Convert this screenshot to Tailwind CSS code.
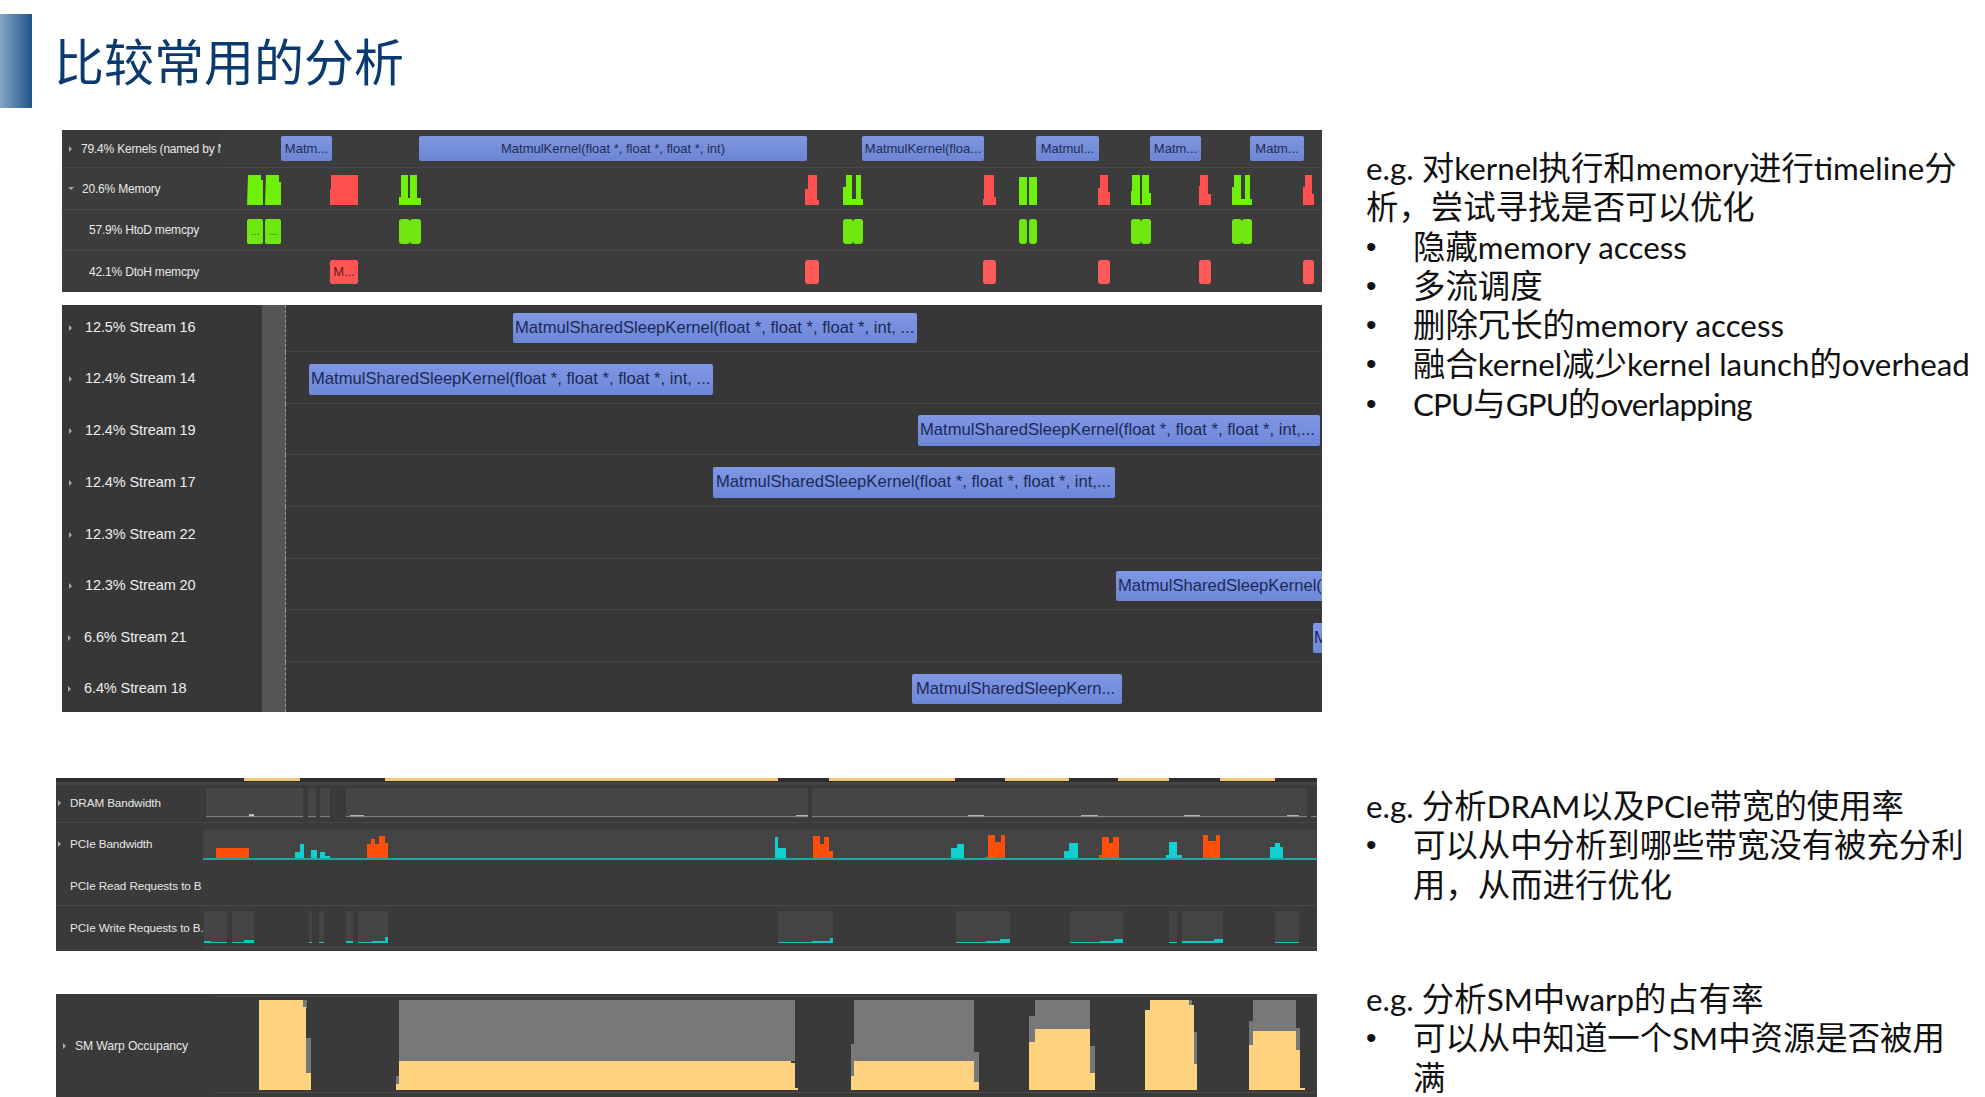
<!DOCTYPE html>
<html lang="zh-CN">
<head>
  <meta charset="UTF-8">
  <title>比较常用的分析</title>
  <script src="https://cdn.jsdelivr.net/npm/@tailwindcss/browser@4"></script>
</head>
<body class="bg-white h-[1097px] overflow-hidden flex font-['Liberation_Sans',sans-serif]">

  <!-- left column: title + timeline captures -->
  <div class="w-[1322px] shrink-0">
    <header class="h-[130px] flex items-start">
      <div class="w-[32px] h-[94px] mt-[14px] bg-linear-to-r from-[#86a5c4] to-[#1d5689]"></div>
      <h1 class="ml-[22px] mt-[23px] text-[50px] leading-[72px] text-[#0b3a70] font-['Noto_Sans_CJK_SC',sans-serif] whitespace-nowrap">比较常用的分析</h1>
    </header>

    <!-- kernels / memory -->
    <section class="ml-[62px] w-[1260px] h-[162px] bg-[#3c3c3c] text-[#e8e8e8] text-[12px] tracking-[-0.2px]">
      <div class="flex h-[38px] border-b border-[#484848]">
        <div class="w-[159px] shrink-0 flex items-center pl-[7px] gap-[9px] overflow-hidden whitespace-nowrap bg-[#3a3a3a]">
          <span class="w-0 h-0 border-y-[3px] border-y-transparent border-l-[3px] border-l-[#aaa]"></span>79.4% Kernels (named by N
        </div>
        <div class="relative flex-1 text-[#1f2d55] text-[13px] tracking-normal">
          <div class="absolute left-[60px] w-[51px] top-[6px] h-[25px] rounded-[2px] bg-linear-to-b from-[#7f97e0] to-[#6c86d4] flex items-center justify-center whitespace-nowrap">Matm...</div>
          <div class="absolute left-[198px] w-[388px] top-[6px] h-[25px] rounded-[2px] bg-linear-to-b from-[#7f97e0] to-[#6c86d4] flex items-center justify-center whitespace-nowrap">MatmulKernel(float *, float *, float *, int)</div>
          <div class="absolute left-[641px] w-[122px] top-[6px] h-[25px] rounded-[2px] bg-linear-to-b from-[#7f97e0] to-[#6c86d4] flex items-center justify-center whitespace-nowrap">MatmulKernel(floa...</div>
          <div class="absolute left-[815px] w-[63px] top-[6px] h-[25px] rounded-[2px] bg-linear-to-b from-[#7f97e0] to-[#6c86d4] flex items-center justify-center whitespace-nowrap">Matmul...</div>
          <div class="absolute left-[929px] w-[51px] top-[6px] h-[25px] rounded-[2px] bg-linear-to-b from-[#7f97e0] to-[#6c86d4] flex items-center justify-center whitespace-nowrap">Matm...</div>
          <div class="absolute left-[1029px] w-[54px] top-[6px] h-[25px] rounded-[2px] bg-linear-to-b from-[#7f97e0] to-[#6c86d4] flex items-center justify-center whitespace-nowrap">Matm...</div>
        </div>
      </div>
      <div class="flex h-[42px] border-b border-[#484848]">
        <div class="w-[159px] shrink-0 flex items-center pl-[6px] gap-[8px] whitespace-nowrap">
          <span class="w-0 h-0 border-x-[3px] border-x-transparent border-t-[3px] border-t-[#aaa]"></span>20.6% Memory
        </div>
        <svg class="flex-1 block" viewBox="221 168 1101 41" preserveAspectRatio="none">
          <g fill="#6ef00a">
            <path d="M248 175h13v5h2v25h-16z"/><path d="M266 175h13v7h2v23h-16z"/>
            <path d="M401 175h7v23h2v-23h7v23h4v7h-22v-8h2z"/>
            <path d="M846 175h6v24h4v-24h5v24h2v6h-20v-18h3z"/>
            <path d="M1019 177h8v28h-8zM1029 177h8v28h-8z"/>
            <path d="M1132 175h8v29h2v-29h7v18h2v12h-20v-14h1z"/>
            <path d="M1234 175h7v24h4v-24h5v24h2v6h-20v-18h2z"/>
          </g>
          <g fill="#ff4f4f">
            <path d="M331 175h27v30h-28v-16h1z"/>
            <path d="M808 175h9v25h2v5h-14v-16h3z"/>
            <path d="M984 175h10v22h2v8h-13v-6h1z"/>
            <path d="M1100 175h8v17h2v13h-12v-17h2z"/>
            <path d="M1200 175h8v19h3v11h-12v-19h1z"/>
            <path d="M1305 175h7v19h2v11h-11v-18h2z"/>
          </g>
        </svg>
      </div>
      <div class="flex h-[41px] border-b border-[#484848]">
        <div class="w-[159px] shrink-0 flex items-center pl-[27px] whitespace-nowrap">57.9% HtoD memcpy</div>
        <div class="relative flex-1 text-[#2f6a10] text-[11px] leading-none">
          <div class="absolute left-[26px] w-[16px] top-[9px] h-[25px] rounded-[2px] bg-[#6ee80e] flex items-center justify-center">...</div>
          <div class="absolute left-[44px] w-[16px] top-[9px] h-[25px] rounded-[2px] bg-[#6ee80e] flex items-center justify-center">...</div>
          <div class="absolute left-[178px] w-[11px] top-[9px] h-[25px] rounded-[3px] bg-[#6ee80e]"></div>
          <div class="absolute left-[189px] w-[11px] top-[9px] h-[25px] rounded-[3px] bg-[#6ee80e]"></div>
          <div class="absolute left-[622px] w-[10px] top-[9px] h-[25px] rounded-[3px] bg-[#6ee80e]"></div>
          <div class="absolute left-[632px] w-[10px] top-[9px] h-[25px] rounded-[3px] bg-[#6ee80e]"></div>
          <div class="absolute left-[798px] w-[8px] top-[9px] h-[25px] rounded-[3px] bg-[#6ee80e]"></div>
          <div class="absolute left-[808px] w-[8px] top-[9px] h-[25px] rounded-[3px] bg-[#6ee80e]"></div>
          <div class="absolute left-[910px] w-[10px] top-[9px] h-[25px] rounded-[3px] bg-[#6ee80e]"></div>
          <div class="absolute left-[920px] w-[10px] top-[9px] h-[25px] rounded-[3px] bg-[#6ee80e]"></div>
          <div class="absolute left-[1011px] w-[10px] top-[9px] h-[25px] rounded-[3px] bg-[#6ee80e]"></div>
          <div class="absolute left-[1021px] w-[10px] top-[9px] h-[25px] rounded-[3px] bg-[#6ee80e]"></div>
        </div>
      </div>
      <div class="flex h-[41px]">
        <div class="w-[159px] shrink-0 flex items-center pl-[27px] whitespace-nowrap">42.1% DtoH memcpy</div>
        <div class="relative flex-1 text-[#5a1f1f] text-[13px] tracking-normal">
          <div class="absolute left-[109px] w-[28px] top-[9px] h-[24px] rounded-[2px] bg-[#ff5555] flex items-center justify-center">M...</div>
          <div class="absolute left-[584px] w-[14px] top-[9px] h-[24px] rounded-[3px] bg-[#ff5a5a]"></div>
          <div class="absolute left-[762px] w-[13px] top-[9px] h-[24px] rounded-[3px] bg-[#ff5a5a]"></div>
          <div class="absolute left-[877px] w-[12px] top-[9px] h-[24px] rounded-[3px] bg-[#ff5a5a]"></div>
          <div class="absolute left-[978px] w-[12px] top-[9px] h-[24px] rounded-[3px] bg-[#ff5a5a]"></div>
          <div class="absolute left-[1082px] w-[11px] top-[9px] h-[24px] rounded-[3px] bg-[#ff5a5a]"></div>
        </div>
      </div>
    </section>

    <!-- streams -->
    <section class="ml-[62px] mt-[13px] w-[1260px] h-[407px] bg-[#373737] text-[#eeeeee] text-[14.5px] tracking-[-0.1px] overflow-hidden">
      <div class="flex h-[47px]">
        <div class="w-[200px] shrink-0 flex items-center pl-[7px] gap-[13px] whitespace-nowrap pb-[1px]"><span class="w-0 h-0 border-y-[3px] border-y-transparent border-l-[3px] border-l-[#aaa]"></span>12.5% Stream 16</div>
        <div class="w-[24px] shrink-0 bg-[#555555] border-r border-dashed border-[#9a9a9a]"></div>
        <div class="relative flex-1 border-b border-[#444444] text-[#1b2a55] text-[16.6px] tracking-normal">
          <div class="absolute left-[227px] w-[404px] top-[8px] h-[30px] rounded-[2px] bg-linear-to-b from-[#7f97e4] to-[#6d87d8] flex items-center px-[2px] whitespace-nowrap overflow-hidden">MatmulSharedSleepKernel(float *, float *, float *, int, ...</div>
        </div>
      </div>
      <div class="flex h-[52px]">
        <div class="w-[200px] shrink-0 flex items-center pl-[7px] gap-[13px] whitespace-nowrap pt-[2px]"><span class="w-0 h-0 border-y-[3px] border-y-transparent border-l-[3px] border-l-[#aaa]"></span>12.4% Stream 14</div>
        <div class="w-[24px] shrink-0 bg-[#555555] border-r border-dashed border-[#9a9a9a]"></div>
        <div class="relative flex-1 border-b border-[#444444] text-[#1b2a55] text-[16.6px] tracking-normal">
          <div class="absolute left-[23px] w-[404px] top-[12px] h-[31px] rounded-[2px] bg-linear-to-b from-[#7f97e4] to-[#6d87d8] flex items-center px-[2px] whitespace-nowrap overflow-hidden">MatmulSharedSleepKernel(float *, float *, float *, int, ...</div>
        </div>
      </div>
      <div class="flex h-[51px]">
        <div class="w-[200px] shrink-0 flex items-center pl-[7px] gap-[13px] whitespace-nowrap pt-[2px]"><span class="w-0 h-0 border-y-[3px] border-y-transparent border-l-[3px] border-l-[#aaa]"></span>12.4% Stream 19</div>
        <div class="w-[24px] shrink-0 bg-[#555555] border-r border-dashed border-[#9a9a9a]"></div>
        <div class="relative flex-1 border-b border-[#444444] text-[#1b2a55] text-[16.6px] tracking-normal">
          <div class="absolute left-[632px] w-[402px] top-[11px] h-[31px] rounded-[2px] bg-linear-to-b from-[#7f97e4] to-[#6d87d8] flex items-center px-[2px] whitespace-nowrap overflow-hidden">MatmulSharedSleepKernel(float *, float *, float *, int,...</div>
        </div>
      </div>
      <div class="flex h-[52px]">
        <div class="w-[200px] shrink-0 flex items-center pl-[7px] gap-[13px] whitespace-nowrap pt-[3px]"><span class="w-0 h-0 border-y-[3px] border-y-transparent border-l-[3px] border-l-[#aaa]"></span>12.4% Stream 17</div>
        <div class="w-[24px] shrink-0 bg-[#555555] border-r border-dashed border-[#9a9a9a]"></div>
        <div class="relative flex-1 border-b border-[#444444] text-[#1b2a55] text-[16.6px] tracking-normal">
          <div class="absolute left-[427px] w-[402px] top-[12px] h-[31px] rounded-[2px] bg-linear-to-b from-[#7f97e4] to-[#6d87d8] flex items-center px-[3px] whitespace-nowrap overflow-hidden">MatmulSharedSleepKernel(float *, float *, float *, int,...</div>
        </div>
      </div>
      <div class="flex h-[52px]">
        <div class="w-[200px] shrink-0 flex items-center pl-[7px] gap-[13px] whitespace-nowrap pt-[3px]"><span class="w-0 h-0 border-y-[3px] border-y-transparent border-l-[3px] border-l-[#aaa]"></span>12.3% Stream 22</div>
        <div class="w-[24px] shrink-0 bg-[#555555] border-r border-dashed border-[#9a9a9a]"></div>
        <div class="relative flex-1 border-b border-[#444444]"></div>
      </div>
      <div class="flex h-[51px]">
        <div class="w-[200px] shrink-0 flex items-center pl-[7px] gap-[13px] whitespace-nowrap pt-[3px]"><span class="w-0 h-0 border-y-[3px] border-y-transparent border-l-[3px] border-l-[#aaa]"></span>12.3% Stream 20</div>
        <div class="w-[24px] shrink-0 bg-[#555555] border-r border-dashed border-[#9a9a9a]"></div>
        <div class="relative flex-1 border-b border-[#444444] text-[#1b2a55] text-[16.6px] tracking-normal overflow-hidden">
          <div class="absolute left-[830px] w-[206px] top-[12px] h-[30px] rounded-l-[2px] bg-linear-to-b from-[#7f97e4] to-[#6d87d8] flex items-center px-[2px] whitespace-nowrap overflow-hidden">MatmulSharedSleepKernel(</div>
        </div>
      </div>
      <div class="flex h-[52px]">
        <div class="w-[200px] shrink-0 flex items-center pl-[6px] gap-[13px] whitespace-nowrap pt-[3px]"><span class="w-0 h-0 border-y-[3px] border-y-transparent border-l-[3px] border-l-[#aaa]"></span>6.6% Stream 21</div>
        <div class="w-[24px] shrink-0 bg-[#555555] border-r border-dashed border-[#9a9a9a]"></div>
        <div class="relative flex-1 border-b border-[#444444] text-[#1b2a55] text-[16.6px] overflow-hidden">
          <div class="absolute left-[1027px] w-[9px] top-[13px] h-[30px] rounded-l-[2px] bg-linear-to-b from-[#7f97e4] to-[#6d87d8] flex items-center pl-[1px] overflow-hidden">M</div>
        </div>
      </div>
      <div class="flex h-[50px]">
        <div class="w-[200px] shrink-0 flex items-center pl-[6px] gap-[13px] whitespace-nowrap pt-[4px]"><span class="w-0 h-0 border-y-[3px] border-y-transparent border-l-[3px] border-l-[#aaa]"></span>6.4% Stream 18</div>
        <div class="w-[24px] shrink-0 bg-[#555555] border-r border-dashed border-[#9a9a9a]"></div>
        <div class="relative flex-1 text-[#1b2a55] text-[16.6px] tracking-normal">
          <div class="absolute left-[626px] w-[210px] top-[12px] h-[30px] rounded-[2px] bg-linear-to-b from-[#7f97e4] to-[#6d87d8] flex items-center px-[4px] whitespace-nowrap overflow-hidden">MatmulSharedSleepKern...</div>
        </div>
      </div>
    </section>

    <!-- bandwidth -->
    <section class="ml-[56px] mt-[66px] w-[1261px] h-[173px] bg-[#3a3a3a] text-[#e6e6e6] text-[11.7px] tracking-[-0.1px]">
      <svg class="block w-full h-[7px]" viewBox="56 777 1261 7" preserveAspectRatio="none">
        <rect x="56" y="777" width="1261" height="7" fill="#2e2e2e"/>
        <rect x="56" y="781" width="1261" height="3" fill="#444444"/>
        <g fill="#f0c878">
          <rect x="244" y="777" width="56" height="3"/><rect x="385" y="777" width="393" height="3"/>
          <rect x="829" y="777" width="126" height="3"/><rect x="1005" y="777" width="64" height="3"/>
          <rect x="1118" y="777" width="51" height="3"/><rect x="1220" y="777" width="55" height="3"/>
        </g>
      </svg>
      <div class="flex h-[38px] border-b border-[#484848]">
        <div class="w-[147px] shrink-0 flex items-center pl-[2px] gap-[9px] whitespace-nowrap pb-[1px]"><span class="w-0 h-0 border-y-[3px] border-y-transparent border-l-[3px] border-l-[#aaa]"></span>DRAM Bandwidth</div>
        <svg class="flex-1 block" viewBox="203 784 1114 38" preserveAspectRatio="none">
          <g fill="#454545">
            <rect x="206" y="787" width="97" height="30"/><rect x="308" y="787" width="8" height="30"/>
            <rect x="320" y="787" width="10" height="30"/><rect x="346" y="787" width="462" height="30"/>
            <rect x="812" y="787" width="495" height="30"/>
          </g>
          <g fill="#8a8a8a">
            <rect x="206" y="816" width="97" height="1"/><rect x="308" y="816" width="8" height="1"/>
            <rect x="320" y="816" width="10" height="1"/><rect x="346" y="816" width="462" height="1"/>
            <rect x="812" y="816" width="495" height="1"/><rect x="1311" y="816" width="6" height="1"/>
          </g>
          <g fill="#c8c8c8">
            <rect x="249" y="814" width="5" height="2"/><rect x="350" y="815" width="14" height="1"/>
            <rect x="796" y="815" width="12" height="1"/><rect x="968" y="815" width="16" height="1"/>
            <rect x="1081" y="815" width="17" height="1"/><rect x="1184" y="815" width="16" height="1"/>
            <rect x="1287" y="815" width="12" height="1"/>
          </g>
        </svg>
      </div>
      <div class="flex h-[42px]">
        <div class="w-[147px] shrink-0 flex items-center pl-[2px] gap-[9px] whitespace-nowrap"><span class="w-0 h-0 border-y-[3px] border-y-transparent border-l-[3px] border-l-[#aaa]"></span>PCIe Bandwidth</div>
        <svg class="flex-1 block" viewBox="203 822 1114 42" preserveAspectRatio="none">
          <rect x="203" y="828" width="1114" height="30" fill="#444444"/>
          <g fill="#ff4d0a">
            <rect x="216" y="847" width="33" height="11"/>
            <path d="M367 858v-15h4v-5h4v5h4v-8h6v7h3v16z"/>
            <path d="M813 858v-23h7v8h4v-7h5v14h4v8z"/>
            <path d="M985 858v-2h3v-22h7v7h6v-7h4v24z"/>
            <path d="M1099 858v-4h3v-18h7v6h4v-6h6v22z"/>
            <path d="M1200 858v-1h3v-23h5v6h8v-6h4v24z"/>
          </g>
          <g fill="#12cfd2">
            <path d="M295 858v-7h5v-8h4v15z"/><rect x="311" y="849" width="6" height="9"/>
            <path d="M320 858v-7h5v4h5v3z"/>
            <path d="M775 858v-22h3v11h8v11z"/>
            <path d="M951 858v-11h6v-4h7v15z"/>
            <path d="M1064 858v-8h5v-8h9v16z"/>
            <path d="M1166 858v-4h3v-13h8v13h5v4z"/>
            <path d="M1270 858v-12h5v-4h5v4h3v12z"/>
          </g>
          <rect x="203" y="857" width="1114" height="2" fill="#1fa6a2"/>
        </svg>
      </div>
      <div class="flex h-[41px] border-b border-[#4a4a4a]">
        <div class="w-[147px] shrink-0 flex items-center pl-[14px] whitespace-nowrap overflow-hidden pt-[1px]">PCIe Read Requests to B</div>
        <div class="flex-1"></div>
      </div>
      <div class="flex h-[45px]">
        <div class="w-[147px] shrink-0 flex items-center pl-[14px] whitespace-nowrap overflow-hidden pb-[2px]">PCIe Write Requests to B.</div>
        <svg class="flex-1 block" viewBox="203 905 1114 45" preserveAspectRatio="none">
          <g fill="#444444">
            <rect x="204" y="910" width="23" height="32"/><rect x="232" y="910" width="22" height="32"/>
            <rect x="309" y="910" width="3" height="32"/><rect x="319" y="910" width="5" height="32"/>
            <rect x="346" y="910" width="7" height="32"/><rect x="358" y="910" width="30" height="32"/>
            <rect x="778" y="910" width="55" height="32"/><rect x="956" y="910" width="54" height="32"/>
            <rect x="1070" y="910" width="53" height="32"/><rect x="1169" y="910" width="8" height="32"/>
            <rect x="1182" y="910" width="41" height="32"/><rect x="1275" y="910" width="24" height="32"/>
          </g>
          <g fill="#14c4c8">
            <rect x="204" y="940" width="7" height="2"/><rect x="211" y="941" width="16" height="1"/>
            <rect x="232" y="941" width="12" height="1"/><rect x="244" y="939" width="10" height="3"/>
            <rect x="309" y="941" width="3" height="1"/><rect x="319" y="941" width="5" height="1"/>
            <rect x="346" y="940" width="7" height="2"/><rect x="358" y="941" width="14" height="1"/>
            <rect x="372" y="940" width="16" height="2"/><rect x="385" y="936" width="3" height="6"/>
            <rect x="778" y="941" width="34" height="1"/><rect x="812" y="940" width="19" height="2"/><rect x="830" y="937" width="3" height="5"/>
            <rect x="956" y="941" width="30" height="1"/><rect x="986" y="940" width="24" height="2"/><rect x="1000" y="938" width="10" height="4"/>
            <rect x="1070" y="941" width="30" height="1"/><rect x="1100" y="940" width="23" height="2"/><rect x="1114" y="938" width="9" height="4"/>
            <rect x="1169" y="941" width="8" height="1"/><rect x="1182" y="940" width="20" height="2"/><rect x="1202" y="940" width="21" height="2"/><rect x="1214" y="938" width="9" height="4"/>
            <rect x="1275" y="941" width="24" height="1"/>
          </g>
          <rect x="203" y="946" width="1114" height="1" fill="#4e4e4e"/>
        </svg>
      </div>
    </section>

    <!-- warp occupancy -->
    <section class="ml-[56px] mt-[43px] w-[1261px] h-[104px] bg-[#3a3a3a] text-[#e6e6e6] text-[12.2px] tracking-[-0.1px] flex">
      <div class="w-[158px] shrink-0 flex items-center pl-[7px] gap-[9px] whitespace-nowrap"><span class="w-0 h-0 border-y-[3px] border-y-transparent border-l-[3px] border-l-[#aaa]"></span>SM Warp Occupancy</div>
      <svg class="flex-1 block" viewBox="214 993 1103 104" preserveAspectRatio="none">
        <rect x="214" y="995" width="1103" height="1" fill="#4a4a4a"/>
        <rect x="214" y="1091" width="1103" height="1" fill="#4a4a4a"/>
        <g fill="#787878">
          <rect x="303" y="999" width="4" height="8"/><rect x="306" y="1037" width="5" height="35"/>
          <rect x="399" y="999" width="396" height="61"/><rect x="396" y="1075" width="3" height="8"/>
          <rect x="854" y="999" width="120" height="61"/><rect x="851" y="1043" width="3" height="32"/><rect x="974" y="1051" width="5" height="30"/>
          <rect x="1035" y="999" width="55" height="30"/><rect x="1029" y="1015" width="6" height="26"/><rect x="1090" y="1045" width="5" height="27"/>
          <rect x="1189" y="999" width="3" height="5"/><rect x="1194" y="1031" width="3" height="32"/>
          <rect x="1253" y="999" width="43" height="31"/><rect x="1249" y="1020" width="4" height="24"/><rect x="1296" y="1027" width="4" height="22"/>
        </g>
        <g fill="#ffd27f">
          <path d="M259 1089v-90h44v7h3v66h5v17z"/>
          <path d="M396 1089v-6h3v-23h392v2h4v25h3v2z"/>
          <path d="M851 1089v-14h3v-15h120v21h5v8z"/>
          <path d="M1029 1089v-48h6v-13h55v44h5v17z"/>
          <path d="M1145 1089v-80h5v-10h39v5h5v59h3v26z"/>
          <path d="M1249 1089v-45h4v-14h43v19h4v38h5v2z"/>
        </g>
      </svg>
    </section>
  </div>

  <!-- right column: notes -->
  <div class="flex-1 pl-[44px] pt-[148px] text-[32.4px] leading-[39.3px] text-[#111111] whitespace-nowrap font-['Lato','Noto_Sans_CJK_SC',sans-serif]">
    <div>
      <p><span class="text-[31.3px] leading-none">e.g.</span> 对<span class="text-[31.3px] leading-none">kernel</span>执行和<span class="text-[31.3px] leading-none">memory</span>进行<span class="text-[31.3px] leading-none">timeline</span>分<br>析，尝试寻找是否可以优化</p>
      <ul>
        <li class="flex"><span class="w-[47px] shrink-0 text-[30px] font-['Liberation_Sans',sans-serif]">•</span><span>隐藏<span class="text-[31.3px] leading-none">memory access</span></span></li>
        <li class="flex"><span class="w-[47px] shrink-0 text-[30px] font-['Liberation_Sans',sans-serif]">•</span><span>多流调度</span></li>
        <li class="flex"><span class="w-[47px] shrink-0 text-[30px] font-['Liberation_Sans',sans-serif]">•</span><span>删除冗长的<span class="text-[31.3px] leading-none">memory access</span></span></li>
        <li class="flex"><span class="w-[47px] shrink-0 text-[30px] font-['Liberation_Sans',sans-serif]">•</span><span>融合<span class="text-[31.3px] leading-none">kernel</span>减少<span class="text-[31.3px] leading-none">kernel launch</span>的<span class="text-[31.3px] leading-none">overhead</span></span></li>
        <li class="flex"><span class="w-[47px] shrink-0 text-[30px] font-['Liberation_Sans',sans-serif]">•</span><span><span class="text-[31.3px] leading-none tracking-[-0.8px]">CPU</span>与<span class="text-[31.3px] leading-none tracking-[-0.8px]">GPU</span>的<span class="text-[31.3px] leading-none tracking-[-0.8px]">overlapping</span></span></li>
      </ul>
    </div>
    <div class="mt-[363px]">
      <p><span class="text-[31.3px] leading-none">e.g.</span> 分析<span class="text-[31.3px] leading-none">DRAM</span>以及<span class="text-[31.3px] leading-none">PCIe</span>带宽的使用率</p>
      <ul>
        <li class="flex"><span class="w-[47px] shrink-0 text-[30px] font-['Liberation_Sans',sans-serif]">•</span><span>可以从中分析到哪些带宽没有被充分利<br>用，从而进行优化</span></li>
      </ul>
    </div>
    <div class="mt-[75px]">
      <p><span class="text-[31.3px] leading-none">e.g.</span> 分析<span class="text-[31.3px] leading-none">SM</span>中<span class="text-[31.3px] leading-none">warp</span>的占有率</p>
      <ul>
        <li class="flex"><span class="w-[47px] shrink-0 text-[30px] font-['Liberation_Sans',sans-serif]">•</span><span>可以从中知道一个<span class="text-[31.3px] leading-none">SM</span>中资源是否被用<br>满</span></li>
      </ul>
    </div>
  </div>

</body>
</html>
